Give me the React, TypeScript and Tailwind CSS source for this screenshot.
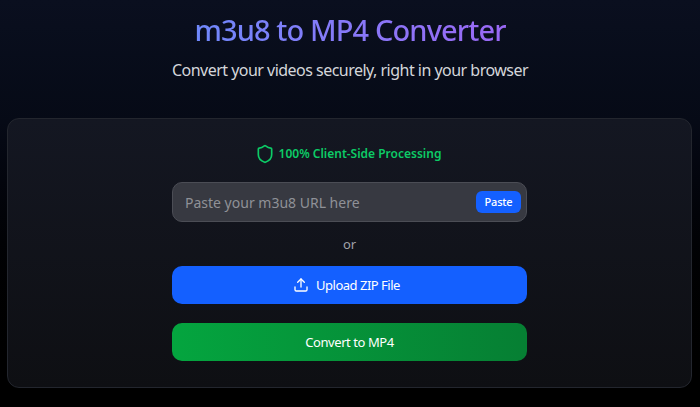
import { Shield, Upload } from "lucide-react";

export default function App() {
  return (
    <div className="h-[407px] overflow-hidden flex flex-col items-center bg-gradient-to-b from-[#0a0f1f] via-[#060a16] via-30% to-black font-['Noto_Sans',sans-serif]">
      {/* Header */}
      <h1 className="mt-[10px] h-[40px] leading-[40px] text-[29px] font-medium tracking-[-0.88px] bg-gradient-to-r from-[#6f88fb] to-[#9a68f5] bg-clip-text text-transparent">
        m3u8 to MP4 Converter
      </h1>
      <p className="mt-[9px] h-[22px] leading-[22px] text-[16px] tracking-[-0.52px] text-[#d4d6da]">
        Convert your videos securely, right in your browser
      </p>

      {/* Card */}
      <div className="mt-[37px] ml-[7px] self-start w-[685px] h-[270px] shrink-0 flex flex-col items-center rounded-[12px] border border-[#23262e] bg-gradient-to-b from-[#141722] to-[#0e0f13]">
        <div className="mt-[25px] mr-[3px] h-[20px] flex items-center gap-[4px] text-[#0ccb66]">
          <Shield size={20} strokeWidth={2} />
          <span className="text-[12px] font-semibold leading-[20px]">100% Client-Side Processing</span>
        </div>

        <div className="mt-[18px] w-[355px] h-[40px] flex items-center justify-between pl-[12px] pr-[5px] rounded-[10px] border border-[#4b4d55] bg-[#373941]">
          <span className="text-[14px] text-[#8f9197]">Paste your m3u8 URL here</span>
          <button className="w-[45px] h-[22px] rounded-[6px] bg-[#1460ff] text-white text-[11px] font-medium tracking-[-0.2px]">Paste</button>
        </div>

        <div className="mt-[13px] h-[18px] leading-[18px] text-[13px] text-[#a0a2a8]">or</div>

        <button className="mt-[13px] w-[355px] h-[38px] shrink-0 flex items-center justify-center gap-[7px] pt-[1px] pr-[6px] rounded-[10px] bg-[#1460ff] text-white text-[13px] tracking-[-0.5px]">
          <Upload size={16} strokeWidth={2} className="-mt-[2px]" />
          Upload ZIP File
        </button>

        <button className="mt-[19px] w-[355px] h-[38px] shrink-0 pt-[2px] rounded-[10px] bg-gradient-to-r from-[#04a53f] to-[#067f33] text-white text-[13px] tracking-[-0.44px]">
          Convert to MP4
        </button>
      </div>
    </div>
  );
}
